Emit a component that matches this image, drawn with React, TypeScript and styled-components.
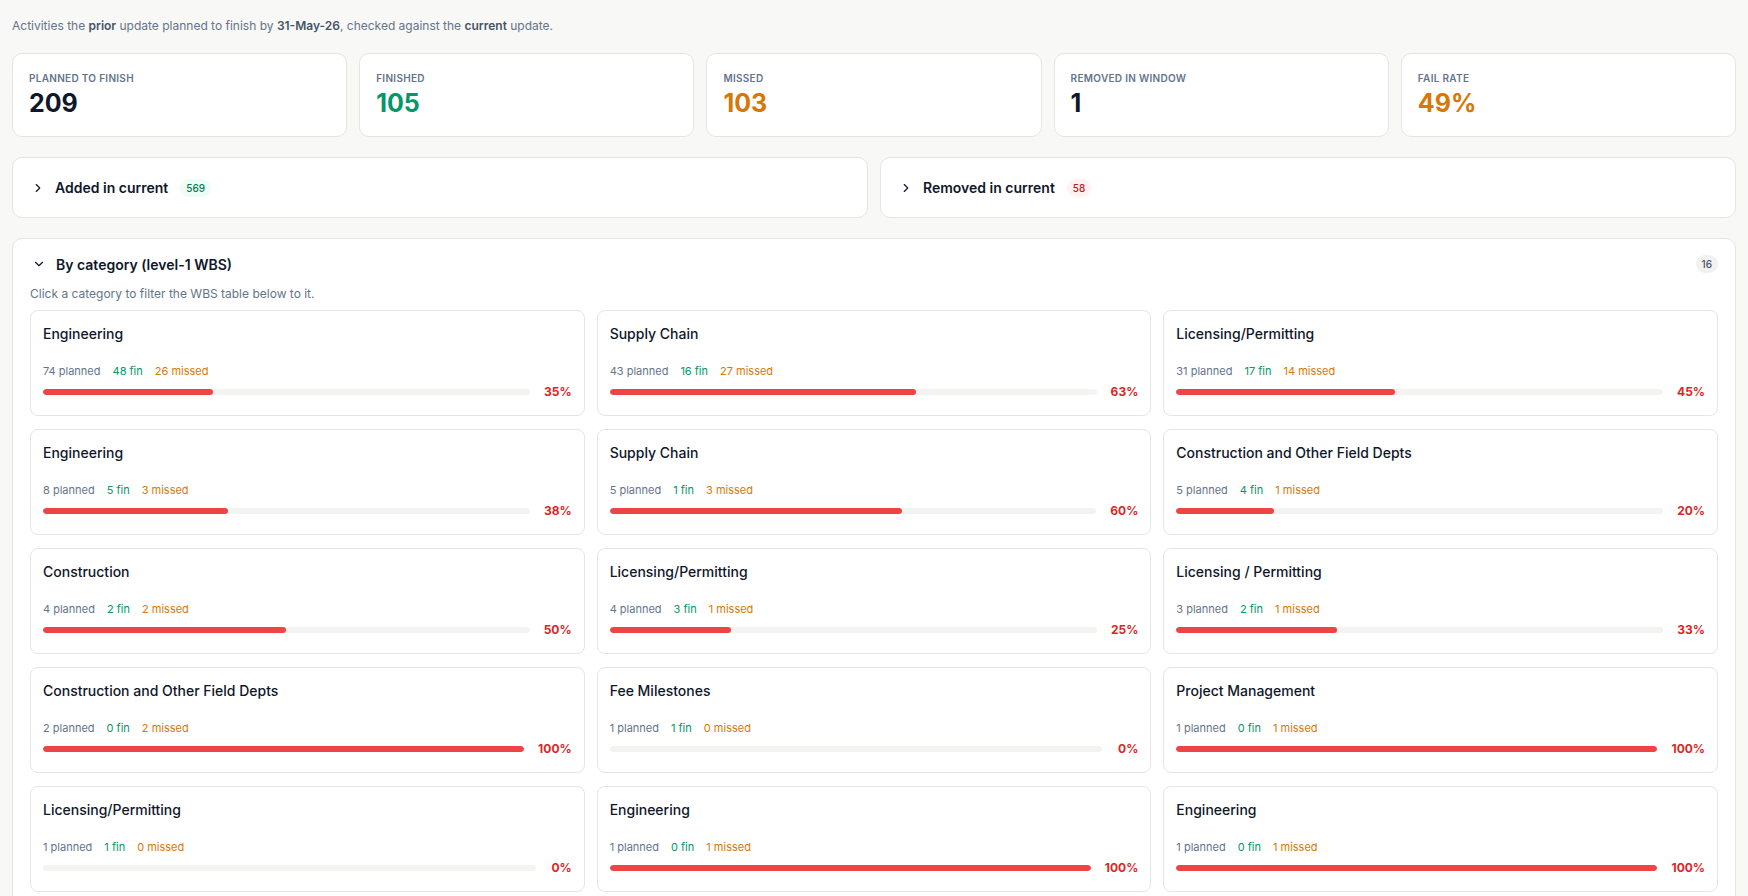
import React from "react";
import styled, { createGlobalStyle } from "styled-components";

const Global = createGlobalStyle`
  body { margin: 0; background: #f8f8f6; font-family: Inter, "Noto Sans", sans-serif; color: #0f172a; }
`;

const Page = styled.div`padding: 18px 12px 12px 12px;`;
const Intro = styled.p`
  margin: 0 0 20px 0; font-size: 12px; color: #64748b;
  b { color: #475569; font-weight: 600; }
`;
const Stats = styled.div`display: grid; grid-template-columns: repeat(5, 1fr); gap: 12px;`;
const StatCard = styled.div`
  background: #fff; border: 1px solid #e5e5e3; border-radius: 10px; height: 84px;
  box-sizing: border-box; padding: 18px 16px;
`;
const StatLabel = styled.div`font-size: 10px; font-weight: 600; letter-spacing: 0.3px; color: #64748b; text-transform: uppercase;`;
const StatValue = styled.div<{ $c: string }>`font-size: 25px; font-weight: 700; color: ${p => p.$c}; margin-top: 4px;`;

const Row2 = styled.div`display: grid; grid-template-columns: 1fr 1fr; gap: 12px; margin-top: 20px;`;
const Collapse = styled.div`
  background: #fff; border: 1px solid #e5e5e3; border-radius: 10px; height: 61px; box-sizing: border-box;
  display: flex; align-items: center; padding: 0 18px; gap: 10px; font-size: 14px; font-weight: 600;
`;
const Badge = styled.span<{ $bg: string; $fg: string }>`
  background: ${p => p.$bg}; color: ${p => p.$fg}; font-size: 10px; font-weight: 500;
  border-radius: 10px; padding: 3px 6px; margin-left: 2px;
`;

const Section = styled.div`
  background: #fff; border: 1px solid #e5e5e3; border-radius: 10px; margin-top: 20px; padding: 16px 17px;
`;
const SecHead = styled.div`display: flex; align-items: center; gap: 10px; font-size: 14px; font-weight: 600; padding-left: 2px;`;
const Spacer = styled.div`flex: 1;`;
const SecSub = styled.div`font-size: 12px; color: #64748b; margin: 13px 0 9px 0;`;
const Grid = styled.div`display: grid; grid-template-columns: repeat(3, 1fr); gap: 13px 12px;`;
const Card = styled.div`
  border: 1px solid #e5e5e3; border-radius: 8px; height: 106px; box-sizing: border-box; padding: 14px 12px 0 12px;
`;
const CardTitle = styled.div`font-size: 14px; font-weight: 500; color: #0f172a;`;
const CardStats = styled.div`display: flex; gap: 12px; font-size: 11px; margin-top: 22px;`;
const S = styled.span<{ $c: string }>`color: ${p => p.$c};`;
const BarRow = styled.div`display: flex; align-items: center; gap: 14px; margin-top: 6px;`;
const Track = styled.div`flex: 1; height: 6px; border-radius: 3px; background: #f3f3f2; overflow: hidden;`;
const Fill = styled.div`height: 100%; background: #ef4444; border-radius: 3px;`;
const Pct = styled.div`font-size: 12px; font-weight: 700; color: #dc2626; min-width: 22px; text-align: right;`;

const Chev = ({ down }: { down?: boolean }) => (
  <svg width="14" height="14" viewBox="0 0 24 24" fill="none" stroke="#0f172a" strokeWidth="2" strokeLinecap="round" strokeLinejoin="round">
    {down ? <path d="M6 9l6 6 6-6" /> : <path d="M9 6l6 6-6 6" />}
  </svg>
);

const cats: [string, number, number, number][] = [
  ["Engineering", 74, 48, 26], ["Supply Chain", 43, 16, 27], ["Licensing/Permitting", 31, 17, 14],
  ["Engineering", 8, 5, 3], ["Supply Chain", 5, 1, 3], ["Construction and Other Field Depts", 5, 4, 1],
  ["Construction", 4, 2, 2], ["Licensing/Permitting", 4, 3, 1], ["Licensing / Permitting", 3, 2, 1],
  ["Construction and Other Field Depts", 2, 0, 2], ["Fee Milestones", 1, 1, 0], ["Project Management", 1, 0, 1],
  ["Licensing/Permitting", 1, 1, 0], ["Engineering", 1, 0, 1], ["Engineering", 1, 0, 1],
];
const pcts = [35, 63, 45, 38, 60, 20, 50, 25, 33, 100, 0, 100, 0, 100, 100];

export default function App() {
  return (
    <Page>
      <Global />
      <Intro>Activities the <b>prior</b> update planned to finish by <b>31-May-26</b>, checked against the <b>current</b> update.</Intro>
      <Stats>
        <StatCard><StatLabel>Planned to finish</StatLabel><StatValue $c="#0f172a">209</StatValue></StatCard>
        <StatCard><StatLabel>Finished</StatLabel><StatValue $c="#059669">105</StatValue></StatCard>
        <StatCard><StatLabel>Missed</StatLabel><StatValue $c="#d97706">103</StatValue></StatCard>
        <StatCard><StatLabel>Removed in window</StatLabel><StatValue $c="#0f172a">1</StatValue></StatCard>
        <StatCard><StatLabel>Fail rate</StatLabel><StatValue $c="#d97706">49%</StatValue></StatCard>
      </Stats>
      <Row2>
        <Collapse><Chev />Added in current<Badge $bg="#ecfdf5" $fg="#047857">569</Badge></Collapse>
        <Collapse><Chev />Removed in current<Badge $bg="#fef2f2" $fg="#b91c1c">58</Badge></Collapse>
      </Row2>
      <Section>
        <SecHead><Chev down />By category (level-1 WBS)<Spacer /><Badge $bg="#f1f1f0" $fg="#475569">16</Badge></SecHead>
        <SecSub>Click a category to filter the WBS table below to it.</SecSub>
        <Grid>
          {cats.map(([t, p, f, m], i) => (
            <Card key={i}>
              <CardTitle>{t}</CardTitle>
              <CardStats><S $c="#64748b">{p} planned</S><S $c="#059669">{f} fin</S><S $c="#d97706">{m} missed</S></CardStats>
              <BarRow><Track><Fill style={{ width: `${pcts[i]}%` }} /></Track><Pct>{pcts[i]}%</Pct></BarRow>
            </Card>
          ))}
        </Grid>
      </Section>
    </Page>
  );
}
